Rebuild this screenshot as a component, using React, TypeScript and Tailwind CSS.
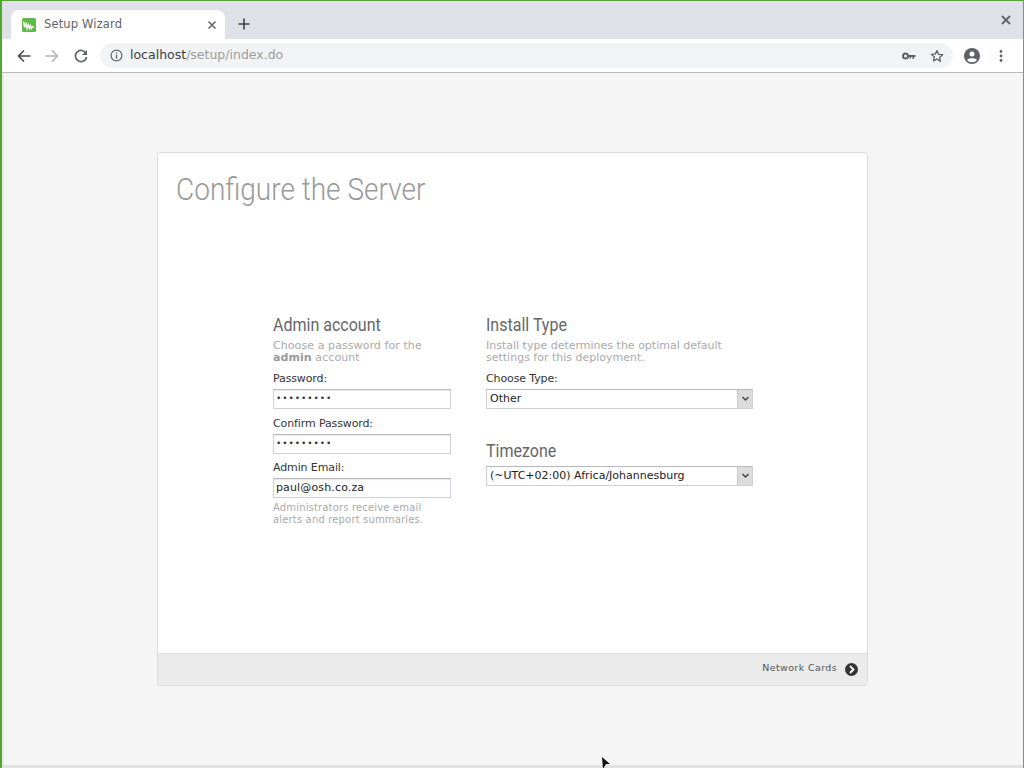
import React from "react";

const dv = { fontFamily: '"DejaVu Sans", sans-serif' };

function Label({ children }: { children: React.ReactNode }) {
  return <div className="text-[11px] leading-[13px] tracking-[-0.12px] text-[#333]">{children}</div>;
}

function TextBox({ value, dots }: { value: string; dots?: boolean }) {
  return (
    <div className="mt-[4px] flex h-[20px] w-[178px] items-center border border-[#cfcfd6] border-t-[#b8b8c0] bg-white pl-[2px] shadow-[inset_0_1px_1px_#e8e8ec]">
      <span className={dots ? "text-[9px] tracking-[0.95px] text-[#333]" : "text-[11px] tracking-[0.14px] text-[#222]"}>{value}</span>
    </div>
  );
}

function SelectBox({ value }: { value: string }) {
  return (
    <div className="flex h-[20px] w-[267px] items-center border border-[#cfcfd6] border-t-[#b8b8c0] bg-white pl-[3px]">
      <span className="flex-1 text-[11px] text-[#222]">{value}</span>
      <span className="flex h-full w-[15px] items-center justify-center border-l border-[#c8c8c8] bg-[#dcdcdc]">
        <svg width="9" height="6" viewBox="0 0 9 6"><path d="M1.5 1l3 3 3-3" fill="none" stroke="#444" strokeWidth="1.5" /></svg>
      </span>
    </div>
  );
}

function Heading({ children }: { children: React.ReactNode }) {
  return (
    <h2 className="origin-left scale-x-[0.89] whitespace-nowrap text-[18px] font-normal leading-[22px] text-[#666]" style={{ fontFamily: "Roboto, sans-serif" }}>
      {children}
    </h2>
  );
}

export default function App() {
  return (
    <div className="relative flex h-[768px] w-[1024px] flex-col overflow-hidden border-l-2 border-r border-t border-[#55a23a] border-r-[#8a8a8a] bg-[#f5f5f5]" style={dv}>
      {/* tab strip */}
      <div className="flex h-[38px] shrink-0 items-end bg-[#dee1e6] pl-[9px]">
        <div className="flex h-[29px] w-[214px] items-center rounded-t-[8px] bg-white pl-[11px] pr-[8px]">
          <svg width="14" height="14" viewBox="0 0 14 14">
            <rect width="14" height="14" rx="1.5" fill="#5dbb46" />
            <path d="M1.5 3.5l1 6 1.3-5 1.2 6 1.3-4 1 4 1-3 1 3 1-2 1.4 1" fill="none" stroke="#fff" strokeWidth="1.3" />
          </svg>
          <span className="ml-[8px] flex-1 text-[11.5px] tracking-[0.15px] text-[#5f6368]">Setup Wizard</span>
          <svg width="10" height="10" viewBox="0 0 10 10"><path d="M1.5 1.5l7 7M8.5 1.5l-7 7" stroke="#5f6368" strokeWidth="1.5" /></svg>
        </div>
        <svg className="mb-[9px] ml-[13px]" width="12" height="12" viewBox="0 0 12 12"><path d="M6 0.5v11M0.5 6h11" stroke="#3c4043" strokeWidth="1.6" /></svg>
        <div className="flex-1" />
        <svg className="mb-[14px] mr-[12px]" width="10" height="10" viewBox="0 0 10 10"><path d="M1 1l8 8M9 1l-8 8" stroke="#5f6368" strokeWidth="1.8" /></svg>
      </div>
      {/* toolbar */}
      <div className="flex h-[34px] shrink-0 items-center border-b border-[#b9b9b9] bg-white pl-[15px]">
        <svg width="14" height="14" viewBox="0 0 14 14"><path d="M13.5 7H2M7 1.5L1.5 7 7 12.5" fill="none" stroke="#4a4d51" strokeWidth="1.7" /></svg>
        <svg className="ml-[14px]" width="14" height="14" viewBox="0 0 14 14"><path d="M.5 7H12M7 1.5L12.5 7 7 12.5" fill="none" stroke="#b4b6b9" strokeWidth="1.7" /></svg>
        <svg className="ml-[15px]" width="14" height="14" viewBox="0 0 14 14"><path d="M12 4.4A5.6 5.6 0 1 0 12.6 8" fill="none" stroke="#5f6368" strokeWidth="1.7" /><path d="M13 1v5H8z" fill="#5f6368" /></svg>
        <div className="ml-[12px] flex h-[25px] w-[853px] items-center rounded-full bg-[#f1f3f4] pl-[10px]">
          <svg width="13" height="13" viewBox="0 0 13 13"><circle cx="6.5" cy="6.5" r="5.4" fill="none" stroke="#5f6368" strokeWidth="1.2" /><path d="M6.5 5.8v3.6M6.5 3.4v1.3" stroke="#5f6368" strokeWidth="1.3" /></svg>
          <span className="ml-[7px] flex-1 text-[12.5px] text-[#9a9da1]"><span className="text-[#3c4043]">localhost</span>/setup/index.do</span>
          <svg width="14" height="8" viewBox="0 0 14 8"><circle cx="3.5" cy="4" r="2.5" fill="none" stroke="#5f6368" strokeWidth="2" /><path d="M6 3h7.5v2H12v2h-1.5V5H9v1.5H7.5V5H6z" fill="#5f6368" /></svg>
          <svg className="ml-[14px] mr-[9px]" width="14" height="14" viewBox="0 0 24 24"><path d="M12 2.8l2.8 6.3 6.9.7-5.2 4.6 1.5 6.8L12 17l-6 3.5 1.5-6.8-5.2-4.6 6.9-.7z" fill="none" stroke="#5f6368" strokeWidth="2.2" strokeLinejoin="round" /></svg>
        </div>
        <svg className="ml-[11px]" width="16" height="16" viewBox="0 0 16 16"><circle cx="8" cy="8" r="8" fill="#5f6368" /><circle cx="8" cy="6" r="2.5" fill="#fff" /><path d="M3 12c1.5-2.4 8.5-2.4 10 0-1.4 1.6-3 2.2-5 2.2s-3.6-.6-5-2.2z" fill="#fff" /></svg>
        <svg className="ml-[19px]" width="4" height="14" viewBox="0 0 4 14"><circle cx="2" cy="2.5" r="1.4" fill="#5f6368" /><circle cx="2" cy="7" r="1.4" fill="#5f6368" /><circle cx="2" cy="11.5" r="1.4" fill="#5f6368" /></svg>
      </div>
      {/* page */}
      <div className="flex-1 border-b-[3px] border-l-2 border-b-[#dfe1e5] border-l-[#e9e9e9] pl-[153px] pt-[79px]">
        <div className="flex h-[534px] w-[711px] flex-col rounded-[3px] border border-[#dcdcdc] bg-white">
          <div className="flex-1 pl-[18px]">
            <h1 className="mt-[18px] h-[36px] origin-left scale-x-[0.875] whitespace-nowrap text-[32px] font-light leading-[36px] text-[#999]" style={{ fontFamily: "Roboto, sans-serif" }}>
              Configure the Server
            </h1>
            <div className="ml-[97px] mt-[107px] flex">
              <div className="w-[213px]">
                <Heading>Admin account</Heading>
                <p className="mt-[4px] w-[178px] text-[11px] leading-[12px] tracking-[0.08px] text-[#aaa]">
                  Choose a password for the <b className="text-[#999]">admin</b> account
                </p>
                <div className="mt-[8px]"><Label>Password:</Label></div>
                <TextBox value="•••••••••" dots />
                <div className="mt-[8px]"><Label>Confirm Password:</Label></div>
                <TextBox value="•••••••••" dots />
                <div className="mt-[7px]"><Label>Admin Email:</Label></div>
                <TextBox value="paul@osh.co.za" />
                <p className="mt-[4px] w-[178px] text-[10px] leading-[12px] tracking-[0.16px] text-[#aaa]">
                  Administrators receive email alerts and report summaries.
                </p>
              </div>
              <div>
                <Heading>Install Type</Heading>
                <p className="mt-[4px] text-[11px] leading-[12px] text-[#aaa]">
                  Install type determines the optimal default<br />settings for this deployment.
                </p>
                <div className="mb-[4px] mt-[8px]"><Label>Choose Type:</Label></div>
                <SelectBox value="Other" />
                <div className="mb-[4px] mt-[31px]"><Heading>Timezone</Heading></div>
                <SelectBox value="(~UTC+02:00) Africa/Johannesburg" />
              </div>
            </div>
          </div>
          <div className="flex h-[32px] items-center justify-end rounded-b-[3px] border-t border-[#e0e0e0] bg-[#ebebeb] pb-[2px] pr-[9px]">
            <span className="text-[9.5px] tracking-[0.38px] text-[#555]">Network Cards</span>
            <svg className="ml-[8px] mt-[2px]" width="13" height="13" viewBox="0 0 13 13"><circle cx="6.5" cy="6.5" r="6.5" fill="#333" /><path d="M5 3l3.5 3.5L5 10" fill="none" stroke="#fff" strokeWidth="1.9" /></svg>
          </div>
        </div>
      </div>
      <svg className="absolute left-[599px] top-[756px]" width="10" height="12" viewBox="0 0 10 12"><path d="M1 0l8 7H5L2 12z" fill="#111" /></svg>
    </div>
  );
}
